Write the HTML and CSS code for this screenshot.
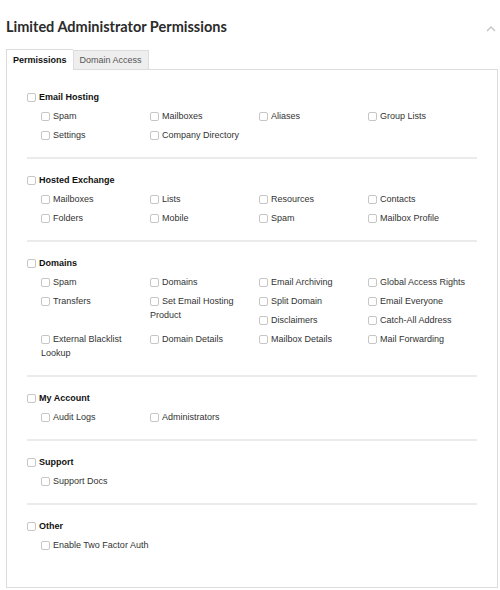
FILE: index.html
```html
<!DOCTYPE html>
<html>
<head>
<meta charset="utf-8">
<link rel="stylesheet" href="styles.css">
</head>
<body>
<div class="wrap">
  <div class="title-row">
    <h1 class="title">Limited Administrator Permissions</h1>
    <svg class="caret" width="10" height="7" viewBox="0 0 10 7"><path d="M1 6 L5 2 L9 6" fill="none" stroke="#c4c4c4" stroke-width="1.3"/></svg>
  </div>
  <div class="tabs">
    <div class="tab active">Permissions</div>
    <div class="tab">Domain Access</div>
  </div>
  <div class="panel">
    <div class="section">
      <div class="head"><span class="cb"></span>Email Hosting</div>
      <div class="grid">
        <div class="item"><span class="cb"></span>Spam</div>
        <div class="item"><span class="cb"></span>Mailboxes</div>
        <div class="item"><span class="cb"></span>Aliases</div>
        <div class="item"><span class="cb"></span>Group Lists</div>
        <div class="item"><span class="cb"></span>Settings</div>
        <div class="item"><span class="cb"></span>Company Directory</div>
      </div>
    </div>
    <div class="section">
      <div class="head"><span class="cb"></span>Hosted Exchange</div>
      <div class="grid">
        <div class="item"><span class="cb"></span>Mailboxes</div>
        <div class="item"><span class="cb"></span>Lists</div>
        <div class="item"><span class="cb"></span>Resources</div>
        <div class="item"><span class="cb"></span>Contacts</div>
        <div class="item"><span class="cb"></span>Folders</div>
        <div class="item"><span class="cb"></span>Mobile</div>
        <div class="item"><span class="cb"></span>Spam</div>
        <div class="item"><span class="cb"></span>Mailbox Profile</div>
      </div>
    </div>
    <div class="section">
      <div class="head"><span class="cb"></span>Domains</div>
      <div class="grid">
        <div class="item"><span class="cb"></span>Spam</div>
        <div class="item"><span class="cb"></span>Domains</div>
        <div class="item"><span class="cb"></span>Email Archiving</div>
        <div class="item"><span class="cb"></span>Global Access Rights</div>
        <div class="item"><span class="cb"></span>Transfers</div>
        <div class="item tall"><span class="cb"></span>Set Email Hosting Product</div>
        <div class="item"><span class="cb"></span>Split Domain</div>
        <div class="item"><span class="cb"></span>Email Everyone</div>
        <div class="item col3"><span class="cb"></span>Disclaimers</div>
        <div class="item"><span class="cb"></span>Catch-All Address</div>
        <div class="item"><span class="cb"></span>External Blacklist Lookup</div>
        <div class="item"><span class="cb"></span>Domain Details</div>
        <div class="item"><span class="cb"></span>Mailbox Details</div>
        <div class="item"><span class="cb"></span>Mail Forwarding</div>
      </div>
    </div>
    <div class="section">
      <div class="head"><span class="cb"></span>My Account</div>
      <div class="grid">
        <div class="item"><span class="cb"></span>Audit Logs</div>
        <div class="item"><span class="cb"></span>Administrators</div>
      </div>
    </div>
    <div class="section">
      <div class="head"><span class="cb"></span>Support</div>
      <div class="grid">
        <div class="item"><span class="cb"></span>Support Docs</div>
      </div>
    </div>
    <div class="section">
      <div class="head"><span class="cb"></span>Other</div>
      <div class="grid">
        <div class="item nowrap"><span class="cb"></span>Enable Two Factor Auth</div>
      </div>
    </div>
  </div>
</div>
</body>
</html>
```
FILE: styles.css
```css
html, body {
  margin: 0;
  padding: 0;
  background: #ffffff;
}
body {
  font-family: "Liberation Sans", Arial, sans-serif;
  color: #333333;
}
.wrap {
  padding: 0 2px 0 6px;
}
.title-row {
  display: flex;
  align-items: center;
  justify-content: space-between;
  padding-top: 15px;
  height: 24px;
}
.title {
  margin: 0;
  font-family: Lato, "Open Sans", sans-serif;
  font-weight: 700;
  font-size: 14.5px;
  line-height: 24px;
  color: #2b2b2b;
}
.caret {
  margin-right: 2px;
  margin-top: 2px;
}
.tabs {
  display: flex;
  margin-top: 10px;
  position: relative;
  z-index: 1;
}
.tab {
  font-size: 9px;
  line-height: 18px;
  padding: 0 6px;
  border: 1px solid #dcdcdc;
  border-bottom: none;
  background: #eeeeee;
  color: #555555;
  margin-top: 1px;
}
.tab.active {
  background: #ffffff;
  color: #111111;
  font-weight: bold;
  margin-top: 0;
  padding: 0 6px;
  line-height: 20px;
  margin-bottom: -1px;
  border-right: none;
}
.panel {
  border: 1px solid #dcdcdc;
  padding: 6px 20px 20px 20px;
}
.section {
  padding: 14px 0 15px;
  border-bottom: 2px solid #ebebeb;
}
.section:last-child {
  border-bottom: none;
}
.head {
  font-size: 9px;
  line-height: 14px;
  font-weight: bold;
  color: #111111;
  margin-bottom: 5px;
}
.grid {
  display: grid;
  grid-template-columns: repeat(4, 109px);
  row-gap: 5px;
  margin-left: 14px;
}
.item {
  font-size: 9px;
  line-height: 14px;
  color: #333333;
}
.item.tall {
  grid-row: span 2;
}
.item.col3 {
  grid-column: 3;
}
.item.nowrap {
  white-space: nowrap;
}
.cb {
  display: inline-block;
  width: 9px;
  height: 9px;
  border: 1px solid #c6c6c6;
  border-radius: 2px;
  background: #ffffff;
  margin-right: 3px;
  vertical-align: -2px;
  box-sizing: border-box;
}
```
